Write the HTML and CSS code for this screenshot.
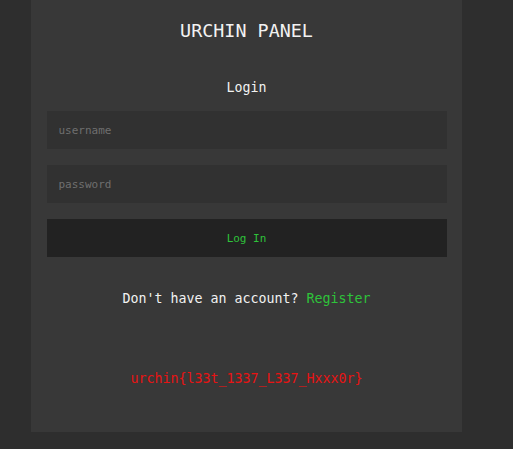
FILE: index.html
```html
<!DOCTYPE html>
<html>
<head>
<meta charset="utf-8">
<link rel="stylesheet" href="styles.css">
</head>
<body>
<div class="panel">
  <h1 class="title">URCHIN PANEL</h1>
  <h2 class="subtitle">Login</h2>
  <form class="form">
    <input class="field" type="text" placeholder="username">
    <input class="field" type="password" placeholder="password">
    <button class="btn" type="button">Log In</button>
  </form>
  <p class="register">Don't have an account? <a class="link" href="#">Register</a></p>
  <p class="flag">urchin{l33t_1337_L337_Hxxx0r}</p>
</div>
</body>
</html>
```
FILE: styles.css
```css
html, body {
  margin: 0;
  padding: 0;
  height: 100%;
}
body {
  background: #2e2e2e;
  font-family: "DejaVu Sans Mono", "Liberation Mono", monospace;
  color: #f2f2f2;
  display: flex;
  align-items: flex-start;
}
.panel {
  margin-left: 31px;
  width: 431px;
  height: 432px;
  background: #383838;
  display: flex;
  flex-direction: column;
  align-items: center;
}
.title {
  margin: 18px 0 0;
  font-weight: normal;
  font-size: 18.4px;
  line-height: 26px;
  letter-spacing: 0;
}
.subtitle {
  margin: 35px 0 0;
  font-weight: normal;
  font-size: 13.3px;
  line-height: 18px;
}
.form {
  margin-top: 14px;
  width: 400px;
  display: flex;
  flex-direction: column;
  gap: 16px;
}
.field, .btn {
  box-sizing: border-box;
  width: 400px;
  height: 38px;
  border: none;
  outline: none;
  margin: 0;
  font-family: "DejaVu Sans Mono", "Liberation Mono", monospace;
  font-size: 11px;
}
.field {
  background: #313131;
  padding: 0 12px;
  color: #ccc;
}
.field::placeholder {
  color: #6f6f6f;
}
.btn {
  background: #222222;
  color: #2ec33a;
}
.register {
  margin: 33px 0 0;
  font-size: 13.3px;
  line-height: 18px;
}
.link {
  color: #2ec33a;
  text-decoration: none;
}
.flag {
  margin: 62px 0 0;
  font-size: 13.3px;
  line-height: 18px;
  color: #e81313;
}
```
